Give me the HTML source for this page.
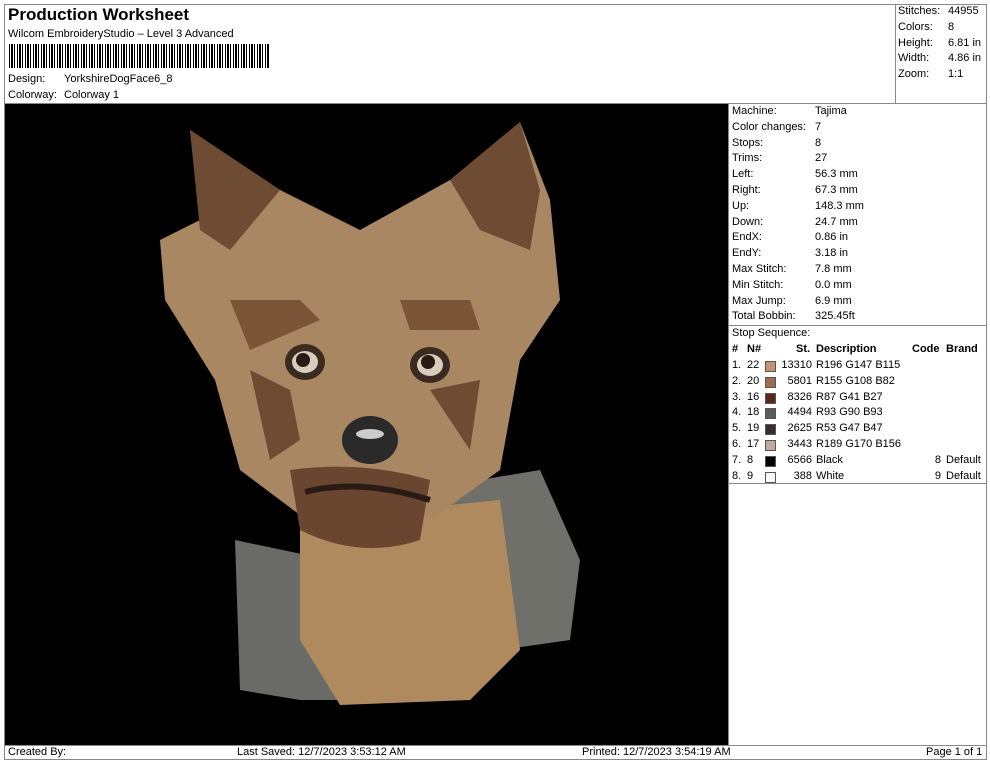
<!DOCTYPE html>
<html><head><style>
body{margin:0;width:990px;height:762px;background:#fff;font-family:"Liberation Sans",sans-serif;color:#000;position:relative;overflow:hidden}
.a{position:absolute}
.t{font-size:11px;line-height:15.8px}
</style></head><body>
<div class="a" style="left:4px;top:4px;width:983px;height:756px;border:1px solid #888;box-sizing:border-box"></div>
<div class="a" style="left:8px;top:5px;font-size:17px;font-weight:bold">Production Worksheet</div>
<div class="a t" style="left:8px;top:27px">Wilcom EmbroideryStudio – Level 3 Advanced</div>
<div class="a" style="left:9px;top:44px;width:261px;height:24px;background:repeating-linear-gradient(90deg,#000 0 1px,#fff 1px 2px,#000 2px 4px,#fff 4px 5px,#000 5px 6px,#fff 6px 8px)"></div>
<div class="a t" style="left:8px;top:72px">Design:</div><div class="a t" style="left:64px;top:72px">YorkshireDogFace6_8</div>
<div class="a t" style="left:8px;top:88px">Colorway:</div><div class="a t" style="left:64px;top:88px">Colorway 1</div>
<div class="a" style="left:895px;top:4px;width:1px;height:100px;background:#888"></div>
<div class="a t" style="left:898px;top:4px;line-height:15.8px">Stitches:<br>Colors:<br>Height:<br>Width:<br>Zoom:</div>
<div class="a t" style="left:948px;top:4px;line-height:15.8px">44955<br>8<br>6.81 in<br>4.86 in<br>1:1</div>
<div class="a" style="left:5px;top:103px;width:982px;height:1px;background:#888"></div>
<div class="a" style="left:5px;top:104px;width:723px;height:641px;background:#000;overflow:hidden">
<svg width="723" height="641" viewBox="5 104 723 641">
<path d="M235 540 L330 560 L340 700 L300 700 L240 690 Z" fill="#6a6b66"/>
<path d="M420 490 L540 470 L580 560 L570 640 L500 650 L430 620 Z" fill="#6f706a"/>
<path d="M300 520 L500 500 L520 650 L470 700 L340 705 L300 640 Z" fill="#b08a5f"/>
<path d="M190 130 L280 190 L360 230 L450 180 L520 122 L550 200 L560 300 L520 360 L500 470 L430 520 L320 530 L240 470 L215 380 L165 300 L160 240 L200 220 Z" fill="#a88762"/>
<path d="M190 130 L280 190 L230 250 L200 230 Z" fill="#6e4c33"/>
<path d="M520 122 L450 180 L480 230 L530 250 L540 190 Z" fill="#6e4c33"/>
<path d="M230 300 L300 300 L320 320 L250 350 Z" fill="#7a5538"/>
<path d="M400 300 L470 300 L480 330 L410 330 Z" fill="#7a5538"/>
<path d="M250 370 L290 390 L300 440 L270 460 Z" fill="#6e4c33"/>
<path d="M430 390 L480 380 L470 450 Z" fill="#6e4c33"/>
<path d="M290 470 Q360 460 430 480 L420 540 Q360 560 300 530 Z" fill="#6a4630"/>
<ellipse cx="305" cy="362" rx="20" ry="18" fill="#3a2a20"/><ellipse cx="305" cy="362" rx="13" ry="11" fill="#d8ccbc"/><circle cx="303" cy="360" r="7" fill="#2a1c14"/>
<ellipse cx="430" cy="365" rx="20" ry="18" fill="#3a2a20"/><ellipse cx="430" cy="365" rx="13" ry="11" fill="#d8ccbc"/><circle cx="428" cy="362" r="7" fill="#2a1c14"/>
<ellipse cx="370" cy="440" rx="28" ry="24" fill="#2a2a2a"/><ellipse cx="370" cy="434" rx="14" ry="5" fill="#ccc"/>
<path d="M305 492 Q360 478 430 500" stroke="#2a1c14" stroke-width="6" fill="none"/>
</svg></div>
<div class="a" style="left:728px;top:104px;width:1px;height:641px;background:#888"></div>
<div class="a t" style="left:732px;top:104px">Machine:<br>Color changes:<br>Stops:<br>Trims:<br>Left:<br>Right:<br>Up:<br>Down:<br>EndX:<br>EndY:<br>Max Stitch:<br>Min Stitch:<br>Max Jump:<br>Total Bobbin:</div>
<div class="a t" style="left:815px;top:104px">Tajima<br>7<br>8<br>27<br>56.3 mm<br>67.3 mm<br>148.3 mm<br>24.7 mm<br>0.86 in<br>3.18 in<br>7.8 mm<br>0.0 mm<br>6.9 mm<br>325.45ft</div>
<div class="a" style="left:729px;top:325px;width:258px;height:1px;background:#888"></div>
<div class="a t" style="left:732px;top:326px">Stop Sequence:</div>
<div class="a t" style="left:732px;top:342px;width:252px">
<div style="position:relative;height:15.8px;font-weight:bold;text-decoration:underline"><span class="a" style="left:0">#</span><span class="a" style="left:15px">N#</span><span class="a" style="left:64px">St.</span><span class="a" style="left:84px">Description</span><span class="a" style="left:180px">Code</span><span class="a" style="left:214px">Brand</span></div>
</div>
<div id="rows"></div>
<div class="a" style="left:5px;top:745px;width:982px;height:1px;background:#888"></div>
<div class="a t" style="left:8px;top:745px">Created By:</div>
<div class="a t" style="left:237px;top:745px">Last Saved: 12/7/2023 3:53:12 AM</div>
<div class="a t" style="left:582px;top:745px">Printed: 12/7/2023 3:54:19 AM</div>
<div class="a t" style="left:926px;top:745px">Page 1 of 1</div>
<script>
var r=[["1.","22","#c49373","13310","R196 G147 B115","",""],["2.","20","#9b6c52","5801","R155 G108 B82","",""],["3.","16","#57291b","8326","R87 G41 B27","",""],["4.","18","#5d5a5d","4494","R93 G90 B93","",""],["5.","19","#352f2f","2625","R53 G47 B47","",""],["6.","17","#bdaa9c","3443","R189 G170 B156","",""],["7.","8","#000","6566","Black","8","Default"],["8.","9","#fff","388","White","9","Default"]];
var h="";r.forEach(function(x,i){var y=358+i*15.8;h+='<div class="a t" style="left:732px;top:'+y+'px">'+x[0]+'</div><div class="a t" style="left:747px;top:'+y+'px">'+x[1]+'</div><div class="a" style="left:765px;top:'+(y+3)+'px;width:9px;height:9px;border:1px solid #555;background:'+x[2]+'"></div><div class="a t" style="left:770px;width:42px;text-align:right;top:'+y+'px">'+x[3]+'</div><div class="a t" style="left:816px;top:'+y+'px">'+x[4]+'</div><div class="a t" style="left:920px;width:21px;text-align:right;top:'+y+'px">'+x[5]+'</div><div class="a t" style="left:946px;top:'+y+'px">'+x[6]+'</div>';});
document.getElementById("rows").innerHTML=h;
</script>
<div class="a" style="left:729px;top:483px;width:258px;height:1px;background:#888"></div>
</body></html>
